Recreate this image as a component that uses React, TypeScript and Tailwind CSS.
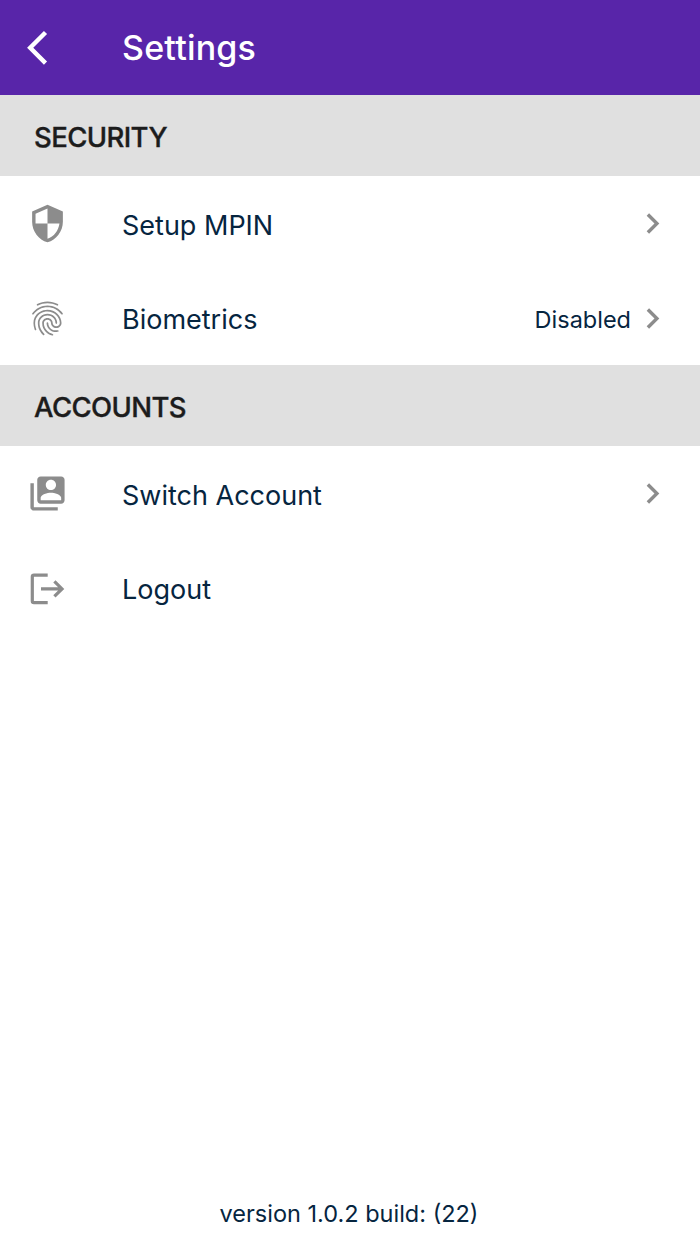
import React from 'react';
import { MdSecurity, MdFingerprint, MdSwitchAccount, MdChevronRight } from 'react-icons/md';

function Section({ children }: { children: React.ReactNode }) {
  return <h2 className="flex h-[81px] items-center bg-[#e0e0e0] px-[34px] pt-[4px] text-[27.5px] font-medium tracking-[-0.6px] text-[#1c1c1c] [-webkit-text-stroke:0.35px_#1c1c1c]">{children}</h2>;
}

function Row({ icon, label, value, arrow = true }: { icon: React.ReactNode; label: string; value?: string; arrow?: boolean }) {
  return (
    <button className="flex h-[94.5px] w-full items-center pt-[0.5px] pr-[27px] pl-[27px] text-left text-[#06253f]">
      <span className="flex w-[95px] shrink-0 text-[#8c8c8c]">{icon}</span>
      <span className="grow pt-[5px] text-[27px]">{label}</span>
      {value && <span className="mr-[1px] pt-[3px] text-[23.5px]">{value}</span>}
      {arrow && <MdChevronRight className="size-[41px] text-[#8c8c8c]" />}
    </button>
  );
}

function LogoutIcon() {
  return (
    <svg className="size-[41px]" viewBox="0 0 41 41" fill="none" stroke="currentColor" strokeWidth="3.2">
      <path d="M20.7 7.1H7Q5.3 7.1 5.3 8.8V32.9Q5.3 34.6 7 34.6H20.7M14 20.9H35M27.4 13.4L35 20.9L27.4 28.4" />
    </svg>
  );
}

export default function App() {
  return (
    <main className="flex h-[1244px] w-[700px] flex-col bg-white font-['Inter',sans-serif]">
      <header className="flex h-[95px] items-center bg-[#5825a9] pl-[27px] text-white">
        <svg className="h-[41px] w-[95px]" viewBox="0 0 95 41" fill="none" stroke="currentColor" strokeWidth="4.4">
          <path d="M18.5 5.5 3.2 20.8 18.5 36.1" />
        </svg>
        <h1 className="text-[34px] font-medium tracking-[0.2px]">Settings</h1>
      </header>
      <Section>SECURITY</Section>
      <Row icon={<MdSecurity className="size-[41px]" />} label="Setup MPIN" />
      <Row icon={<MdFingerprint className="size-[41px]" />} label="Biometrics" value="Disabled" />
      <Section>ACCOUNTS</Section>
      <Row icon={<MdSwitchAccount className="size-[41px]" />} label="Switch Account" />
      <Row icon={<LogoutIcon />} label="Logout" arrow={false} />
      <footer className="mt-auto pr-[2px] pb-[14px] text-center text-[23.5px] leading-[32px] text-[#06253f]">version 1.0.2 build: (22)</footer>
    </main>
  );
}
